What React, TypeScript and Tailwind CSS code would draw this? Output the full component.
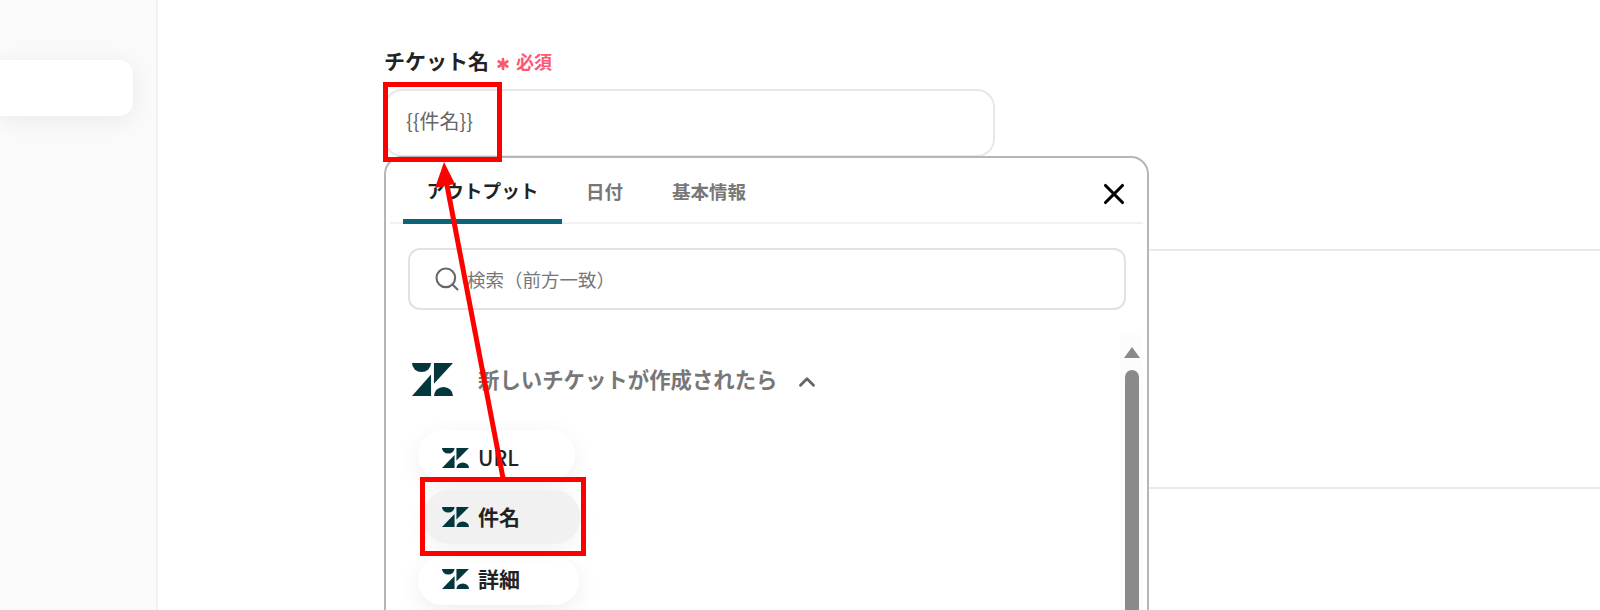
import { Asterisk, ChevronUp, Search, X } from 'lucide-react';

const FONT = 'font-["Noto_Sans_CJK_JP","Noto_Sans",sans-serif]';

const ZendeskLogo = ({ className }: { className: string }) => (
  <svg viewBox="0 0 42 40" preserveAspectRatio="none" className={className} fill="#03363d">
    <path d="M0 0H19.5A9.75 11 0 0 1 0 0Z" />
    <path d="M22.5 0H42L22.5 25Z" />
    <path d="M19.5 14V40H0Z" />
    <path d="M22.5 40A9.75 11 0 0 1 42 40Z" />
  </svg>
);

const OutputItem = ({ label, className }: { label: string; className: string }) => (
  <div className={`flex items-center gap-[9px] rounded-[26px] text-[21px] font-bold text-[#222] ${className}`}>
    <ZendeskLogo className="h-[20px] w-[27px]" />
    <span>{label}</span>
  </div>
);

export default function App() {
  return (
    <div className={`relative flex h-[610px] w-[1600px] overflow-hidden bg-white ${FONT}`}>
      <aside className="h-full w-[158px] shrink-0 border-r-2 border-[#f1f1f1] bg-[#fafafa] pt-[60px]">
        <div className="h-[56px] w-[133px] rounded-r-[14px] bg-white shadow-[0_4px_24px_rgba(0,0,0,0.07)]" />
      </aside>

      <main className="relative flex-1 pl-[226px] pt-[44px]">
        <div className="flex h-[34px] items-center">
          <span className="text-[21px] font-bold text-[#222]">チケット名</span>
          <Asterisk className="ml-[4px] mt-[5px] h-[20px] w-[20px] text-[#fb5a72]" strokeWidth={3.2} />
          <span className="ml-[3px] text-[18px] font-bold text-[#fb5a72]">必須</span>
        </div>
        <div className="mt-[11px] flex h-[68px] w-[611px] items-center rounded-[18px] border-2 border-[#e8e8ec] pb-[4px] pl-[20px] text-[20px] text-[#666]">
          {'{{件名}}'}
        </div>
        <div className="mt-[92px] border-b-2 border-[#e8eaee]" />
        <div className="mt-[236px] border-b-2 border-[#e8eaee]" />

        {/* 変数の選択パネル */}
        <div className="absolute left-[226px] top-[156px] h-[470px] w-[765px] rounded-t-[18px] border-2 border-[#b6b6b6] bg-white">
          <div className="mx-[4px] flex h-[66px] border-b-2 border-[#f1f1f3] pl-[13px]">
            <div className="flex h-[66px] w-[159px] items-center justify-center border-b-[5px] border-[#0b6478] pt-[4px] text-[18.7px] font-bold text-[#222]">
              アウトプット
            </div>
            <div className="ml-[24px] flex h-[64px] items-center pt-[3px] text-[18.5px] font-bold text-[#777]">日付</div>
            <div className="ml-[49px] flex h-[64px] items-center pt-[3px] text-[18.5px] font-bold text-[#777]">基本情報</div>
            <X className="ml-auto mr-[12px] mt-[19px] h-[34px] w-[34px] text-black" strokeWidth={2.2} />
          </div>

          <div className="ml-[22px] mt-[24px] flex h-[62px] w-[718px] items-center rounded-[12px] border-2 border-[#e2e2e2] pl-[23px] text-[18.5px] text-[#777]">
            <Search className="h-[28px] w-[28px] text-[#666]" strokeWidth={1.8} />
            <span className="-ml-[5px] pl-[11px] pt-[2px]">検索（前方一致）</span>
          </div>

          <div className="relative mt-[25px] pl-[26px]">
            <div className="flex h-[88px] items-center">
              <ZendeskLogo className="h-[33px] w-[41px]" />
              <span className="ml-[25px] text-[21.4px] font-bold text-[#777]">新しいチケットが作成されたら</span>
              <ChevronUp className="ml-[17px] mt-[6px] h-[26px] w-[26px] text-[#666]" strokeWidth={2.6} />
            </div>
            <div className="mt-[7px] flex flex-col">
              <OutputItem label="URL" className="ml-[6px] h-[50px] w-[157px] pl-[24px] pt-[5px] !font-medium shadow-[0_6px_24px_rgba(0,0,0,0.07)]" />
              <OutputItem label="件名" className="ml-[11px] mt-[10px] h-[54px] w-[157px] bg-[#f1f1f1] pl-[19px] shadow-[0_6px_24px_rgba(0,0,0,0.05)]" />
              <OutputItem label="詳細" className="ml-[6px] mt-[13px] h-[48px] w-[161px] pb-[5px] pl-[24px] shadow-[0_6px_24px_rgba(0,0,0,0.07)]" />
            </div>

            <div className="absolute right-[4px] top-[0px] flex h-[300px] w-[23px] flex-col items-center bg-[#fcfcfc] pt-[12px]">
              <div className="h-0 w-0 shrink-0 border-x-[8px] border-b-[11px] border-x-transparent border-b-[#8a8a8a]" />
              <div className="mt-[12px] h-full w-[14px] rounded-t-full bg-[#8a8a8a]" />
            </div>
          </div>
        </div>
      </main>

      {/* 注釈の赤枠と矢印 */}
      <div className="absolute left-[383px] top-[82px] h-[80px] w-[119px] border-[5px] border-[#ff0000]" />
      <div className="absolute left-[420px] top-[477px] h-[79px] w-[166px] border-[5px] border-[#ff0000]" />
      <svg className="absolute left-[420px] top-[155px] h-[330px] w-[100px]" viewBox="0 0 100 330">
        <line x1="83" y1="323" x2="26" y2="25" stroke="#ff0000" strokeWidth="5" />
        <path d="M24 7L35 29L15 33Z" fill="#ff0000" />
      </svg>
    </div>
  );
}
